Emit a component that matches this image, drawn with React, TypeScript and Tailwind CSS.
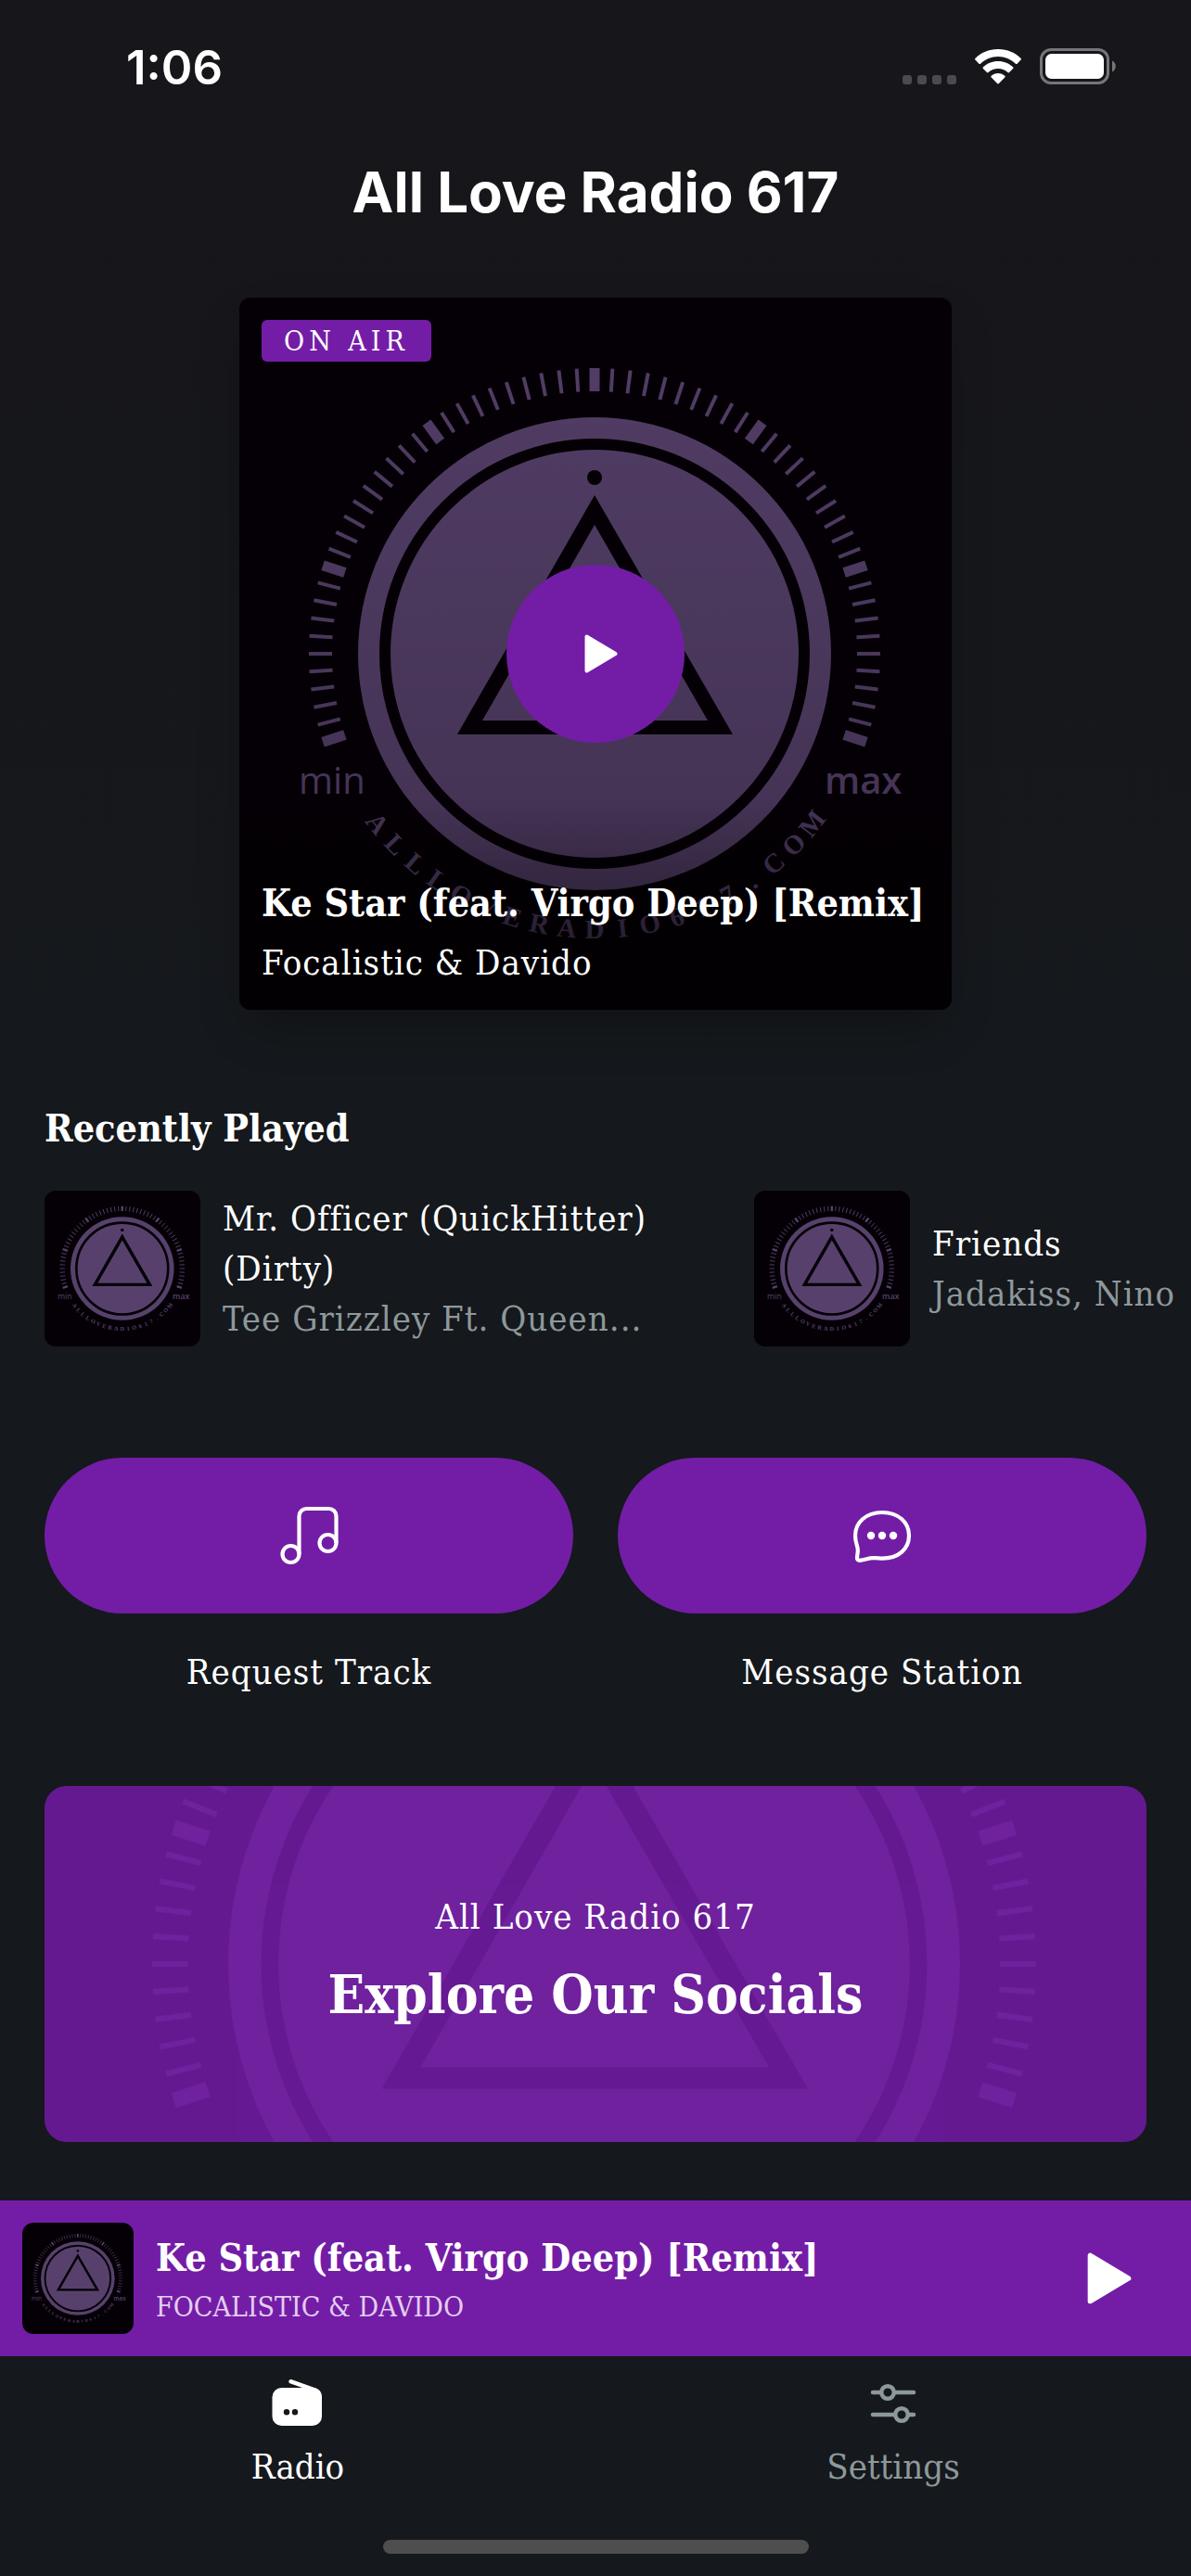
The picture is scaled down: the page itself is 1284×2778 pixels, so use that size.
import { useState } from "react";

const TICKS = Array.from({ length: 61 }, (_, i) => ({
  angle: (i - 30) * 3.6,
  major: i % 10 === 0,
}));

const DOMAIN = "ALLLOVERADIO617.COM".split("");

const tracks = [
  {
    title: "Mr. Officer (QuickHitter) (Dirty)",
    artist: "Tee Grizzley Ft. Queen...",
  },
  { title: "Friends", artist: "Jadakiss, Nino" },
];

const StationArt = ({
  className,
  lettering = true,
}: {
  className?: string;
  lettering?: boolean;
}) => (
  <svg viewBox="0 0 768 768" className={className} aria-hidden="true">
    <rect width="768" height="768" fill="#050006" />
    {TICKS.map((t) => (
      <line
        key={t.angle}
        x1="383"
        x2="383"
        y1="76"
        y2="101"
        stroke="#57416c"
        strokeWidth={t.major ? 11 : 4}
        transform={`rotate(${t.angle} 383 384)`}
      />
    ))}
    <circle cx="383" cy="384" r="255" fill="#57416c" />
    <circle
      cx="383"
      cy="384"
      r="226"
      fill="none"
      stroke="#050006"
      strokeWidth="12"
    />
    <circle cx="383" cy="194" r="8" fill="#050006" />
    <path
      fillRule="evenodd"
      fill="#050006"
      d="M383 213L532 471H235zM383 245L262 456H505z"
    />
    {lettering && (
      <>
        <g
          fill="#57416c"
          fontSize="40"
          fontFamily="'Open Sans', 'Noto Sans', sans-serif"
        >
          <text x="64" y="535">
            min
          </text>
          <text x="631" y="535" fontWeight="600">
            max
          </text>
        </g>
        <g
          fill="#57416c"
          fontSize="29"
          fontWeight="700"
          textAnchor="middle"
          fontFamily="'Liberation Serif', serif"
        >
          {DOMAIN.map((letter, i) => (
            <text
              key={i}
              x="383"
              y="691"
              transform={`rotate(${52 - i * 5.78} 383 384)`}
            >
              {letter}
            </text>
          ))}
        </g>
      </>
    )}
  </svg>
);

const PlayIcon = ({ className }: { className?: string }) => (
  <svg viewBox="0 0 36 42" className={className} aria-hidden="true">
    <path
      d="M2.5 2.5V39.5L33.5 21z"
      fill="currentColor"
      stroke="currentColor"
      strokeWidth="4"
      strokeLinejoin="round"
    />
  </svg>
);

const MusicIcon = () => (
  <svg
    viewBox="0 0 72 72"
    className="size-18"
    fill="none"
    stroke="currentColor"
    strokeWidth="4.2"
    aria-hidden="true"
  >
    <circle cx="16.5" cy="56" r="9" />
    <circle cx="56.5" cy="44" r="9" />
    <path d="M25.5 56V15a8 8 0 0 1 8-8H57.500a8 8 0 0 1 8 8V44" />
  </svg>
);

const MessageIcon = () => (
  <svg
    viewBox="0 0 72 72"
    className="size-18"
    fill="none"
    stroke="currentColor"
    strokeWidth="4.2"
    strokeLinejoin="round"
    aria-hidden="true"
  >
    <path d="M36 11C18.500 11 7 22 7 36c0 9 3.500 12 2.800 17l-.8 6.500c-.3 2.400 1.200 3.600 3.800 3.200 6-1 10-3 15.200-2.500 3 .3 5 .4 8 .4C54 60.600 65 50 65 36S54 11 36 11z" />
    <g fill="currentColor" stroke="none">
      <circle cx="24" cy="36" r="4.200" />
      <circle cx="36" cy="36" r="4.200" />
      <circle cx="48" cy="36" r="4.200" />
    </g>
  </svg>
);

const RadioIcon = () => (
  <svg viewBox="0 0 72 72" className="size-18" aria-hidden="true">
    <path
      fillRule="evenodd"
      fill="currentColor"
      d="M18.500 22H41L27.500 17.300A2.300 2.300 0 0 1 29 13L53.500 21.700C58.500 23 62 26 62 31.500V53a10 10 0 0 1-10 10H18.500a10 10 0 0 1-10-10V32a10 10 0 0 1 10-10zM24 45a3.200 3.200 0 1 0 0 6.400A3.200 3.200 0 1 0 24 45zM33 45a3.200 3.200 0 1 0 0 6.400A3.200 3.200 0 1 0 33 45z"
    />
  </svg>
);

const SettingsIcon = () => (
  <svg
    viewBox="0 0 72 72"
    className="size-18"
    fill="none"
    stroke="currentColor"
    strokeWidth="4.500"
    strokeLinecap="round"
    aria-hidden="true"
  >
    <circle cx="30" cy="27" r="6.800" />
    <circle cx="45" cy="51" r="6.800" />
    <path d="M14 27h8M38 27h20M14 51h23M53 51h5" />
  </svg>
);

const StatusBar = () => (
  <div className="flex h-36 items-center justify-between pr-20 pl-34">
    <span className="font-['Inter',sans-serif] text-[51px] leading-none font-semibold">
      1:06
    </span>
    <div className="flex items-center gap-5">
      <svg viewBox="0 0 58 38" className="h-[38px] w-[58px]" fill="#4b4b4e">
        <rect x="0" y="28" width="10" height="10" rx="3" />
        <rect x="16" y="28" width="10" height="10" rx="3" />
        <rect x="32" y="28" width="10" height="10" rx="3" />
        <rect x="48" y="28" width="10" height="10" rx="3" />
      </svg>
      <svg viewBox="0 0 50 38" className="h-[38px] w-[50px]" fill="#fff">
        <path d="M25 0C35 0 43.500 3.800 49.600 9.900c.5.5.5 1.200 0 1.700l-4 4.100c-.5.5-1.200.5-1.700 0C38.900 10.900 32.300 8 25 8S11.100 10.900 6.100 15.700c-.5.5-1.200.5-1.700 0l-4-4.100c-.5-.5-.5-1.200 0-1.700C6.500 3.800 15 0 25 0z" />
        <path d="M25 13c6.300 0 11.900 2.400 16.100 6.300.5.500.5 1.200 0 1.700l-4 4c-.5.5-1.200.5-1.700 0C32.600 22.500 29 21 25 21s-7.600 1.500-10.400 4c-.5.5-1.200.5-1.700 0l-4-4c-.5-.5-.5-1.200 0-1.700C13.100 15.400 18.700 13 25 13z" />
        <path d="M25 26c2.900 0 5.400 1.100 7.300 2.800.5.5.5 1.200 0 1.700l-6.400 6.500c-.5.5-1.300.5-1.800 0l-6.400-6.500c-.5-.5-.5-1.200 0-1.700C19.600 27.100 22.100 26 25 26z" />
      </svg>
      <svg viewBox="0 0 83 40" className="h-10 w-[83px]">
        <rect
          x="1.500"
          y="1.500"
          width="72"
          height="36"
          rx="10.500"
          fill="none"
          stroke="#767679"
          strokeWidth="3"
        />
        <rect x="6" y="6" width="63" height="27" rx="6.500" fill="#fff" />
        <path d="M78 13.500c5 2 5 10 0 12z" fill="#767679" />
      </svg>
    </div>
  </div>
);

const Action = ({ label, children }: { label: string; children: any }) => (
  <button className="flex flex-1 flex-col gap-9">
    <span className="flex h-42 w-full items-center justify-center rounded-full bg-[#731da6]">
      {children}
    </span>
    <span className="w-full text-center text-[38px] leading-[54px] tracking-[1px]">
      {label}
    </span>
  </button>
);

const App = () => {
  const [tab, setTab] = useState("radio");

  return (
    <div className="flex min-h-screen flex-col overflow-hidden bg-[#15181c] bg-linear-to-b from-[#17161a] to-[#15181c] to-40% font-['DejaVu_Serif_Condensed','DejaVu_Serif',serif] text-white">
      <StatusBar />

      <main className="flex flex-col">
        <h1 className="pt-6 text-center font-['Inter',sans-serif] text-[60px] leading-[78px] font-bold">
          All Love Radio 617
        </h1>

        <section className="relative mx-auto mt-[75px] size-192 overflow-hidden rounded-xl shadow-2xl">
          <StationArt className="size-full" />
          <div className="absolute inset-0 flex flex-col items-start justify-between bg-linear-to-b from-black/5 via-black/20 via-70% to-black/70 p-6">
            <span className="rounded-md bg-[#731da6] px-6 text-[30px] leading-[45px] tracking-[5px]">
              ON AIR
            </span>
            <div className="whitespace-nowrap">
              <h2 className="mb-1 text-[41px] leading-[66px] font-bold">
                Ke Star (feat. Virgo Deep) [Remix]
              </h2>
              <p className="text-[38px] leading-[54px] tracking-[1px]">
                Focalistic & Davido
              </p>
            </div>
          </div>
          <div className="absolute inset-0 flex items-center justify-center">
            <button
              aria-label="Play"
              className="flex size-48 items-center justify-center rounded-full bg-[#731da6] pl-3"
            >
              <PlayIcon className="h-[42px] w-9" />
            </button>
          </div>
        </section>

        <section className="mt-24 pl-12">
          <h2 className="text-[41px] leading-[65px] font-bold">
            Recently Played
          </h2>
          <ul className="mt-[34px] flex gap-12 overflow-hidden">
            {tracks.map((t) => (
              <li
                key={t.title}
                className="flex w-[717px] shrink-0 items-center gap-6"
              >
                <StationArt className="size-42 shrink-0 rounded-xl" />
                <div className="text-[38px] leading-[54px] tracking-[1px]">
                  <p>{t.title}</p>
                  <p className="whitespace-nowrap text-[#8d989b]">{t.artist}</p>
                </div>
              </li>
            ))}
          </ul>
        </section>

        <section className="mt-30 flex gap-12 px-12">
          <Action label="Request Track">
            <MusicIcon />
          </Action>
          <Action label="Message Station">
            <MessageIcon />
          </Action>
        </section>

        <a
          href="#socials"
          className="relative mx-12 mt-24 mb-15 flex h-96 flex-col items-center justify-center overflow-hidden rounded-3xl bg-[#731da6]"
        >
          <div className="absolute inset-0 flex items-center opacity-12">
            <StationArt className="w-full shrink-0" lettering={false} />
          </div>
          <span className="relative text-[38px] leading-[54px] tracking-[1px]">
            All Love Radio 617
          </span>
          <span className="relative mt-3 text-[58px] leading-[90px] font-bold">
            Explore Our Socials
          </span>
        </a>
      </main>

      <footer className="mt-auto">
        <div className="flex items-center gap-6 bg-[#731da6] py-6 pr-16 pl-6">
          <StationArt className="size-30 shrink-0 rounded-xl" />
          <div className="flex-1 whitespace-nowrap">
            <p className="text-[41px] leading-[60px] font-bold">
              Ke Star (feat. Virgo Deep) [Remix]
            </p>
            <p className="text-[30px] leading-[45px] text-[#e3cdf0] uppercase">
              Focalistic & Davido
            </p>
          </div>
          <button aria-label="Play">
            <PlayIcon className="h-14 w-12" />
          </button>
        </div>
        <nav className="flex pt-3 text-[38px] leading-[54px]">
          <button
            onClick={() => setTab("radio")}
            className={`flex flex-1 flex-col items-center gap-2 ${tab === "radio" ? "text-white" : "text-[#8d989b]"}`}
          >
            <RadioIcon />
            Radio
          </button>
          <button
            onClick={() => setTab("settings")}
            className={`flex flex-1 flex-col items-center gap-2 ${tab === "settings" ? "text-white" : "text-[#8d989b]"}`}
          >
            <SettingsIcon />
            Settings
          </button>
        </nav>
        <div className="mx-auto mt-13 mb-6 h-[15px] w-[459px] rounded-full bg-[#4e4e4e]" />
      </footer>
    </div>
  );
};

export default App;
